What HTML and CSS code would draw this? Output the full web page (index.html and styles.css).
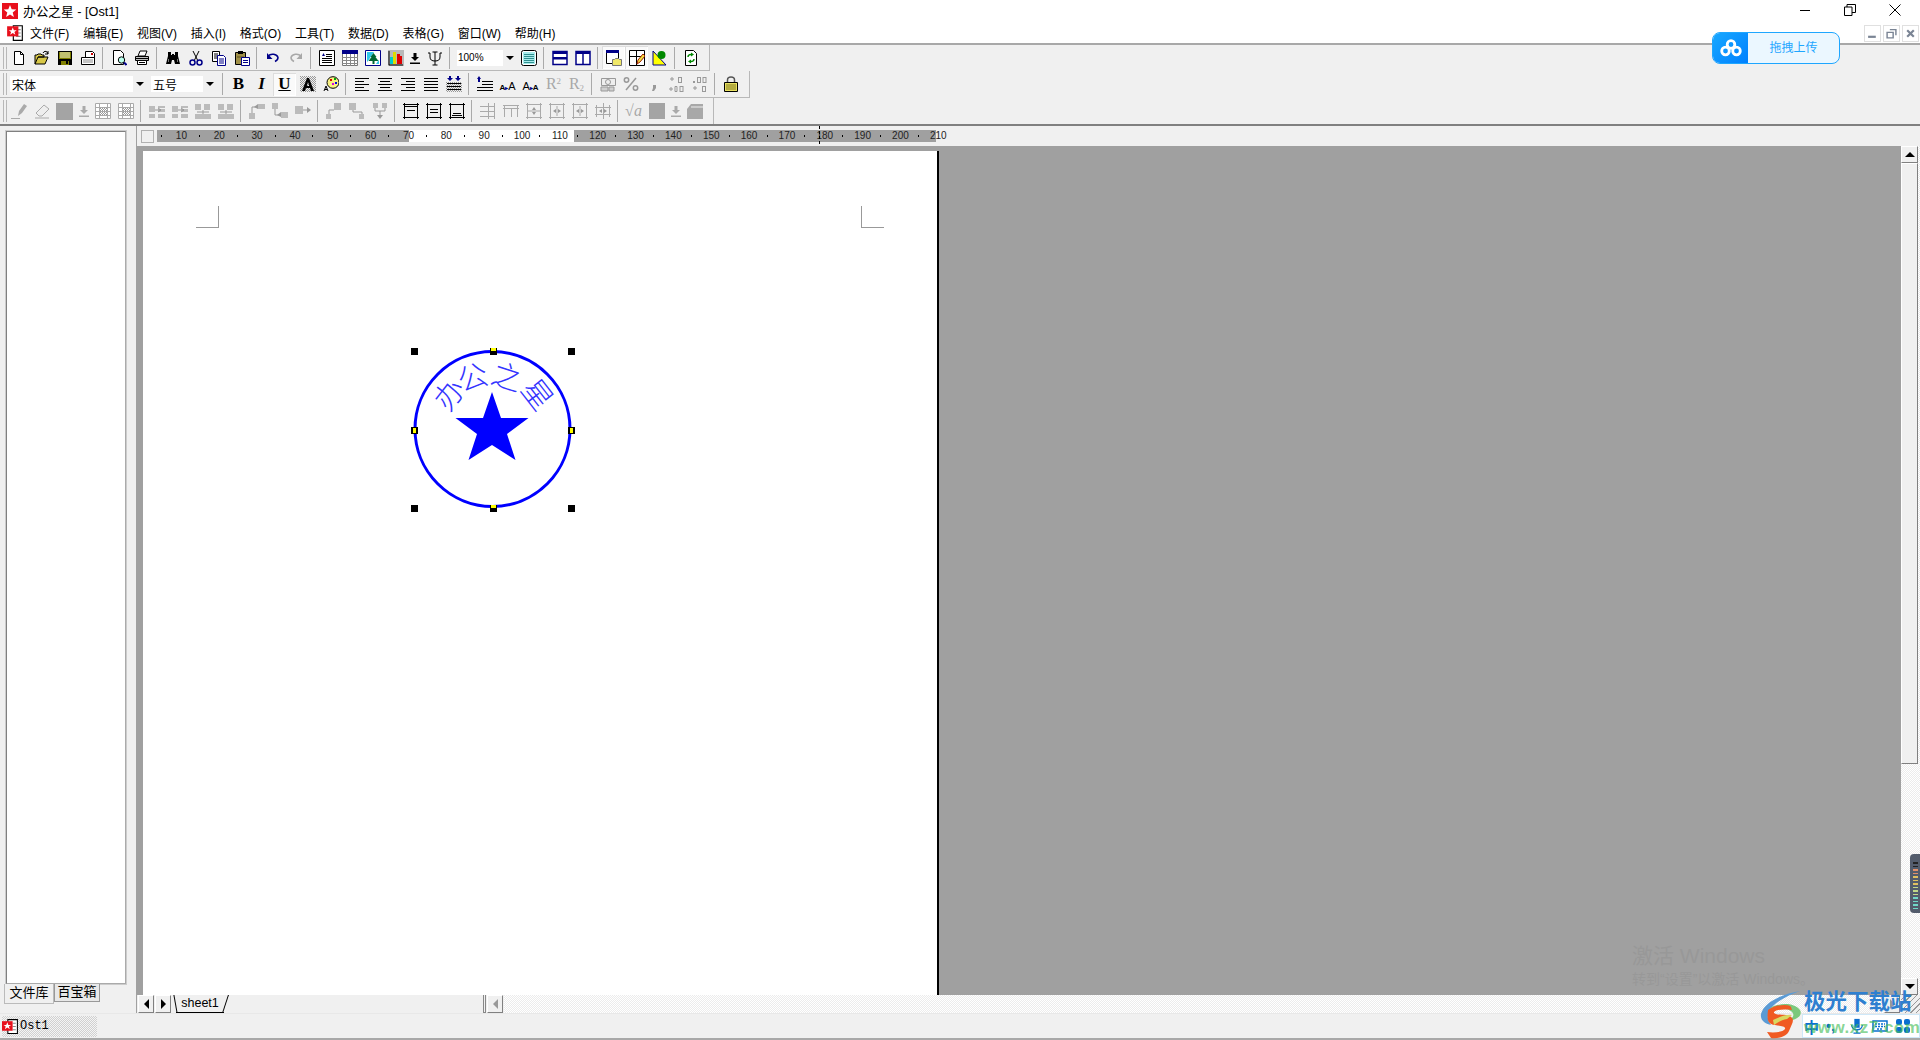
FILE: index.html
```html
<!DOCTYPE html>
<html lang="zh-CN">
<head>
<meta charset="utf-8">
<title>办公之星 - [Ost1]</title>
<link rel="stylesheet" href="styles.css">
</head>
<body>
<svg class="defs" width="0" height="0">
  <pattern id="hatch" width="2" height="2" patternUnits="userSpaceOnUse"><path d="M0 0h1v1H0zM1 1h1v1H1z" fill="#999"/></pattern>
  <symbol id="new" viewBox="0 0 16 16"><path d="M3.500 1.500h6l3 3v10h-9z" fill="#fff" stroke="#000"/><path d="M9.500 1.500v3h3" fill="none" stroke="#000"/></symbol>
  <symbol id="open" viewBox="0 0 16 16"><path d="M1 14V5h2l1-1h3l1 1h2v2H4l-3 7h10l3-7H4" fill="#d8c848" stroke="#000"/><path d="M9 3c1-2 3-2 4-1l1 2M14 1v3h-3" fill="none" stroke="#000"/></symbol>
  <symbol id="save" viewBox="0 0 16 16"><path d="M1 1h14v14H1z" fill="#000"/><path d="M2 2h12v7H2zM4 11h8v4H4z" fill="#808000"/><path d="M3 2h10v6H3z" fill="#c0c070"/><path d="M9 11h2v3H9z" fill="#000"/></symbol>
  <symbol id="form" viewBox="0 0 16 16"><path d="M5.500 1.500h7l2 2v5h-9z" fill="#fff" stroke="#000"/><path d="M1.500 7.500h13v7h-13z" fill="#fff" stroke="#000"/><path d="M3 10h10M3 12h10" stroke="#888"/><path d="M11 3h2v2h-2z" fill="#c00"/></symbol>
  <symbol id="preview" viewBox="0 0 16 16"><path d="M2.500.500h7l3 3v11h-10z" fill="#fff" stroke="#000"/><circle cx="10.500" cy="10" r="3.200" fill="#bfe" stroke="#000"/><path d="M13 12.500l2.500 2.500" stroke="#008" stroke-width="2"/></symbol>
  <symbol id="printer" viewBox="0 0 16 16"><path d="M4 6l2-5h7l-2 5z" fill="#fff" stroke="#000"/><path d="M1.500 6.500h13v4h-13z" fill="#c0c0c0" stroke="#000"/><path d="M3.500 10.500h9v4h-9z" fill="#fff" stroke="#000"/><path d="M1 8.500h14M5 12.500h6" stroke="#000"/></symbol>
  <symbol id="binoc" viewBox="0 0 16 16"><path d="M3 2h3v3h1v-1h2v1h1V2h3v4l2 8H10l-1-4H7l-1 4H1l2-8z" fill="#000"/><path d="M3 9h1v3H3zM12 9h1v3h-1z" fill="#777"/></symbol>
  <symbol id="cut" viewBox="0 0 16 16"><path d="M5 1l4.500 9M11 1l-4.500 9" stroke="#000" fill="none"/><circle cx="4.500" cy="12.500" r="2.500" fill="none" stroke="#008" stroke-width="1.500"/><circle cx="11.500" cy="12.500" r="2.500" fill="none" stroke="#008" stroke-width="1.500"/></symbol>
  <symbol id="copy" viewBox="0 0 16 16"><path d="M1.500 1.500h7v10h-7z" fill="#fff" stroke="#000"/><path d="M3 4h4M3 6h4M3 8h4" stroke="#000"/><path d="M6.500 5.500h6l2 2v8h-8z" fill="#fff" stroke="#008"/><path d="M8 9h5M8 11h5M8 13h5" stroke="#008"/></symbol>
  <symbol id="paste" viewBox="0 0 16 16"><path d="M1.500 2.500h10v12h-10z" fill="#a09048" stroke="#000"/><path d="M4 1h5v3H4z" fill="#000"/><path d="M3 7h7" stroke="#5c5020"/><path d="M7.500 7.500h8v8h-8z" fill="#fff" stroke="#008"/><path d="M9 10.500h5M9 12.500h5" stroke="#008"/></symbol>
  <symbol id="undo" viewBox="0 0 16 16"><path d="M3 6c3-3 9-2 10 1.500 0 2-1 3-3 4" fill="none" stroke="#008" stroke-width="1.500"/><path d="M2 3v6h5.500z" fill="#008"/></symbol>
  <symbol id="redo" viewBox="0 0 16 16"><path d="M13 6C10 3 4 4 3 7.500c0 2 1 3 3 4" fill="none" stroke="#a8a8a8" stroke-width="1.500"/><path d="M14 3v6H8.500z" fill="#a8a8a8"/></symbol>
  <symbol id="textdoc" viewBox="0 0 16 16"><path d="M.500.500h15v15H.500z" fill="#fff" stroke="#000"/><path d="M7 4.500h6M7 6.500h6M3 8.500h10M3 10.500h10M3 12.500h10" stroke="#000"/><path d="M3 6l1.500-3L6 6z" fill="#008"/></symbol>
  <symbol id="table" viewBox="0 0 16 16"><path d="M.500.500h15v15H.500z" fill="#fff" stroke="#777"/><path d="M0 0h16v4H0z" fill="#008"/><path d="M0 7.500h16M0 10.500h16M0 13.500h16M4.500 4v12M8.500 4v12M12.500 4v12" stroke="#888"/></symbol>
  <symbol id="image" viewBox="0 0 16 16"><path d="M.500.500h15v15H.500z" fill="#fff" stroke="#008"/><path d="M2 2h12v12H2z" fill="#fff"/><path d="M2 2h7L3 11l-1 1zM13 11l1-1v4h-3z" fill="#30c8e8"/><path d="M8.500 3l3 4h-1l3 4h-4v3h-2v-3h-4l3-4h-1z" fill="#063"/></symbol>
  <symbol id="chart" viewBox="0 0 16 16"><path d="M0 0h16v16H0z" fill="#b8b8b8"/><path d="M2 7h3v7H2z" fill="#0cc"/><path d="M5 2h3v12H5z" fill="#dd0"/><path d="M9 4h3v10H9z" fill="#d00"/><path d="M12 6h2v8h-2z" fill="#d00"/><path d="M1 1v14h14" fill="none" stroke="#000"/></symbol>
  <symbol id="down" viewBox="0 0 16 16"><path d="M6.500 3h3v4H12l-4 4-4-4h2.500zM3 12.500h10V14H3z" fill="#000"/></symbol>
  <symbol id="psi" viewBox="0 0 16 16"><path d="M8 2v13M5.500 15h5M5.500 2h5M1 3h2v4c0 3 2 4 5 4s5-1 5-4V3h2" fill="none" stroke="#000"/></symbol>
  <symbol id="preview2" viewBox="0 0 16 16"><rect x=".5" y=".5" width="15" height="15" rx="2" fill="#fff" stroke="#000"/><path d="M2 2h12v12H2z" fill="#a8ecec"/><path d="M3 4.500h10M3 6.500h10M3 8.500h10M3 10.500h10M3 12.500h10" stroke="#309090"/></symbol>
  <symbol id="hsplit" viewBox="0 0 16 16"><path d="M1 1.500h14v13H1z" fill="#fff" stroke="#008" stroke-width="1.500"/><path d="M1 1h14v3H1zM1 7h14v2.500H1z" fill="#008"/></symbol>
  <symbol id="vsplit" viewBox="0 0 16 16"><path d="M1 1.500h14v13H1z" fill="#fff" stroke="#008" stroke-width="1.500"/><path d="M1 1h14v3H1z" fill="#008"/><path d="M8 1v14" stroke="#008" stroke-width="1.500"/></symbol>
  <symbol id="winfolder" viewBox="0 0 16 16"><path d="M.500.500h12v13H.500z" fill="#fff" stroke="#000"/><path d="M0 0h13v3H0z" fill="#008"/><path d="M6.500 9.500h2l1-1h3l1 1h2v6h-9z" fill="#f0e868" stroke="#777"/></symbol>
  <symbol id="gridpen" viewBox="0 0 16 16"><path d="M.500.500h15v15H.500zM.500 6.500h15M7.500.500v15" fill="#fff" stroke="#000"/><path d="M8 14l1-4 5-6 2 2-5 6z" fill="#f0e040" stroke="#a02000"/></symbol>
  <symbol id="shapes" viewBox="0 0 16 16"><path d="M1 1v14h13z" fill="#ff0" stroke="#008"/><circle cx="9.500" cy="5" r="4" fill="#080"/></symbol>
  <symbol id="refresh" viewBox="0 0 16 16"><path d="M2.500.500h8l3 3v12h-11z" fill="#fff" stroke="#000"/><path d="M5 7c0-2 2-3 4-2M11 9c0 2-2 3-4 2" fill="none" stroke="#080" stroke-width="1.500"/><path d="M8 2.500l3 2-3 2zM8 9.500l-3 2 3 2z" fill="#080"/></symbol>
  <symbol id="acolor" viewBox="0 0 16 16"><path d="M0 0h16v16H0z" fill="url(#hatch)"/><path d="M2 15L7 2h2l5 13h-3l-1-3H6l-1 3zM6.800 10h2.400L8 6z" fill="#000"/></symbol>
  <symbol id="palette" viewBox="0 0 16 16"><ellipse cx="10" cy="6.500" rx="6" ry="5.800" fill="#f8f080" stroke="#000"/><path d="M7 3h2v2H7z" fill="#d00"/><path d="M11 2h2v2h-2z" fill="#0a0"/><path d="M12 6h2v2h-2z" fill="#00d"/><path d="M9 7h2v2H9z" fill="#d0d"/><path d="M1 15l2-5 2 5M2 13.500h2" fill="none" stroke="#000"/></symbol>
  <symbol id="left" viewBox="0 0 16 16"><path d="M1 2.500h14M1 5.500h9M1 8.500h14M1 11.500h9M1 14.500h14" stroke="#000"/></symbol>
  <symbol id="center" viewBox="0 0 16 16"><path d="M1 2.500h14M3 5.500h10M1 8.500h14M3 11.500h10M1 14.500h14" stroke="#000"/></symbol>
  <symbol id="right" viewBox="0 0 16 16"><path d="M1 2.500h14M6 5.500h9M1 8.500h14M6 11.500h9M1 14.500h14" stroke="#000"/></symbol>
  <symbol id="justify" viewBox="0 0 16 16"><path d="M1 2.500h14M1 5.500h14M1 8.500h14M1 11.500h14M1 14.500h14" stroke="#000"/></symbol>
  <symbol id="distribute" viewBox="0 0 16 16"><path d="M0 6h16v10H0z" fill="url(#hatch)"/><path d="M1 7.500h14M1 10.500h14M1 13.500h14" stroke="#000"/><path d="M3 0h2v2h2L4 5 1 2h2zM11 0h2v2h2l-3 3-3-3h2z" fill="#008"/></symbol>
  <symbol id="spacing" viewBox="0 0 16 16"><path d="M5 5.500h11M5 8.500h11M0 11.500h16M0 14.500h16" stroke="#000"/><path d="M2 0l2 3H0zM1 3h2v3H1z" fill="#008"/></symbol>
  <symbol id="money" viewBox="0 0 16 16"><path d="M1.500 2.500h14v7h-14z" fill="#eee" stroke="#999"/><circle cx="8" cy="6" r="2.500" fill="none" stroke="#999"/><path d="M1 11h7v4H1zM9 11h5v4H9z" fill="#d0d0d0" stroke="#999"/></symbol>
  <symbol id="percent" viewBox="0 0 16 16"><circle cx="3.500" cy="4" r="2.200" fill="none" stroke="#999" stroke-width="1.500"/><circle cx="12.500" cy="12" r="2.200" fill="none" stroke="#999" stroke-width="1.500"/><path d="M13 2L3 14" stroke="#999" stroke-width="1.500"/></symbol>
  <symbol id="comma" viewBox="0 0 16 16"><path d="M7 9h3v3l-2 3H6l1-3z" fill="#999"/></symbol>
  <symbol id="incdec" viewBox="0 0 16 16"><path d="M3 1v4M1 3h4" stroke="#999"/><rect x="9.500" y="1.500" width="3" height="5" fill="none" stroke="#999"/><path d="M1 12h2v2H1zM6 10.500h2v5H6z" fill="none" stroke="#999"/><rect x="11" y="10.500" width="3" height="5" fill="none" stroke="#999"/></symbol>
  <symbol id="decdec" viewBox="0 0 16 16"><path d="M1 5h2v2H1z" fill="#999"/><rect x="5.500" y="1.500" width="3" height="5" fill="none" stroke="#999"/><rect x="11" y="1.500" width="3" height="5" fill="none" stroke="#999"/><path d="M1 12h4M3 10v4" stroke="#999"/><rect x="10.500" y="10.500" width="3" height="5" fill="none" stroke="#999"/></symbol>
  <symbol id="lock" viewBox="0 0 16 16"><path d="M4.500 7V4c0-4 7-4 7 0v3" fill="none" stroke="#555" stroke-width="1.500"/><path d="M1.500 6.500h13v9h-13z" fill="#e8e060" stroke="#000"/><path d="M3 9h10M3 11h10M3 13h10" stroke="#807820"/></symbol>
  <symbol id="pen" viewBox="0 0 16 16"><path d="M0 15.500h9" stroke="#aaa"/><path d="M7 13l1-5 5-7 3 2-5 7z" fill="#aaa"/></symbol>
  <symbol id="eraser" viewBox="0 0 16 16"><path d="M2 10l8-8 5 4-7 7H5z" fill="#eee" stroke="#aaa"/><path d="M1 15h14" stroke="#aaa"/></symbol>
  <symbol id="gdown" viewBox="0 0 16 16"><path d="M6.500 3h3v4H12l-4 4-4-4h2.500zM3 12.500h10V14H3z" fill="#aaa"/></symbol>
  <symbol id="gtable" viewBox="0 0 16 16"><path d="M.500.500h15v15H.500z" fill="#fff" stroke="#aaa"/><path d="M4 4h8v8H4z" fill="url(#hatch)"/><path d="M0 4.500h16M0 8.500h16M0 12.500h16M4.500 0v16M12.500 0v16" stroke="#aaa"/></symbol>
  <symbol id="gbox1" viewBox="0 0 16 16"><path d="M0 3h6v6H0zM9 3h7v2H9zM9 6h7v3H9zM0 11h6v4H0zM9 11h7v4H9z" fill="#bbb"/><path d="M6 7h6M9 5l3 2-3 2" stroke="#999" fill="none"/></symbol>
  <symbol id="gbox2" viewBox="0 0 16 16"><path d="M0 1h6v6H0zM9 1h6v6H9zM0 11h6v5H0zM5 11h6v5H5zM11 11h5v5h-5z" fill="#bbb"/><path d="M8 7v4M2 9h12" stroke="#999"/></symbol>
  <symbol id="gflow1" viewBox="0 0 16 16"><path d="M0 10h6v6H0zM9 1h7v5H9z" fill="#bbb"/><path d="M3 10V4h6" fill="none" stroke="#999"/><path d="M9 1L5 4l4 2z" fill="#999"/></symbol>
  <symbol id="gflow2" viewBox="0 0 16 16"><path d="M0 0h6v6H0zM9 9h7v6H9z" fill="#bbb"/><path d="M3 6v6h6" fill="none" stroke="#999"/><path d="M9 9l-4 3 4 2z" fill="#999"/></symbol>
  <symbol id="gflow3" viewBox="0 0 16 16"><path d="M0 3h8v8H0z" fill="#bbb"/><path d="M8 7h6" stroke="#999"/><path d="M12 4l4 3-4 3z" fill="#999"/></symbol>
  <symbol id="gup1" viewBox="0 0 16 16"><path d="M0 11h5v5H0zM8 0h7v7H8z" fill="#bbb"/><path d="M3 11V7h5" fill="none" stroke="#999"/></symbol>
  <symbol id="gup2" viewBox="0 0 16 16"><path d="M0 0h7v7H0zM10 11h5v5h-5z" fill="#bbb"/><path d="M4 7v2h9v2" fill="none" stroke="#999"/></symbol>
  <symbol id="gup3" viewBox="0 0 16 16"><path d="M1 0h5v5H1zM10 0h5v5h-5z" fill="#bbb"/><path d="M3 5v3h10V5M8 8v5" fill="none" stroke="#999"/><path d="M5 12h6l-3 4z" fill="#999"/></symbol>
  <symbol id="frame1" viewBox="0 0 16 16"><path d="M0 1.500h16M0 14.500h16M1.500 0v16M14.500 0v16" stroke="#000"/><path d="M2 3.500h12M4 7.500h8" stroke="#000" fill="none"/></symbol>
  <symbol id="frame2" viewBox="0 0 16 16"><path d="M0 1.500h16M0 14.500h16M1.500 0v16M14.500 0v16" stroke="#000"/><path d="M4 6.500h8M4 9.500h8" stroke="#000"/></symbol>
  <symbol id="frame3" viewBox="0 0 16 16"><path d="M0 1.500h16M0 14.500h16M1.500 0v16M14.500 0v16" stroke="#000"/><path d="M3 12.500h10M4 10.500h8" stroke="#000"/></symbol>
  <symbol id="g1" viewBox="0 0 16 16"><path d="M8.500 0v16M14.500 0v16M0 3.500h15M0 8.500h15M0 13.500h15" stroke="#aaa"/></symbol>
  <symbol id="g2" viewBox="0 0 16 16"><path d="M0 2.500h16M0 5.500h16M1.500 2v12M8.500 5v9M14.500 2v12" stroke="#aaa"/></symbol>
  <symbol id="g3" viewBox="0 0 16 16"><path d="M1.500 0v16M14.500 0v16M0 1.500h16M0 14.500h16M1 8h14" stroke="#aaa"/><path d="M8 4l2 3H6zM8 12l2-3H6z" fill="#999"/></symbol>
  <symbol id="g4" viewBox="0 0 16 16"><path d="M0 1.500h16M0 14.500h16M1.500 0v16M14.500 0v16M8 3v10" stroke="#aaa"/><path d="M4 8l3-2v4zM12 8L9 6v4z" fill="#999"/></symbol>
  <symbol id="g5" viewBox="0 0 16 16"><path d="M8.500 0v16M0 4.500h16M0 11.500h16M1.500 2v12M14.500 2v12" stroke="#aaa"/><path d="M4 8l3-2v4zM12 8L9 6v4z" fill="#999"/></symbol>
  <symbol id="folderg" viewBox="0 0 16 16"><path d="M0 6l4-5h12v15H0z" fill="#a8a8a8"/><path d="M4 4h12" stroke="#eee"/></symbol>
</svg>

<div class="app">
  <header class="title-bar">
    <svg class="app-icon" viewBox="0 0 16 16"><rect width="16" height="16" fill="#e8101c"/><path d="M8 2l1.700 4.300 4.600.300-3.600 2.900 1.200 4.500L8 11.500l-3.900 2.500 1.200-4.500-3.600-2.900 4.600-.300z" fill="#fff"/></svg>
    <span class="title-text">办公之星 - [Ost1]</span>
    <div class="win-controls">
      <svg class="win-btn" viewBox="0 0 12 12"><path d="M1 6.500h10" stroke="#000"/></svg>
      <svg class="win-btn" viewBox="0 0 12 12"><path d="M.500 3h7.500v8.500H.500z" fill="none" stroke="#000"/><path d="M3 3V.500h8.500v8H8" fill="none" stroke="#000"/></svg>
      <svg class="win-btn" viewBox="0 0 12 12"><path d="M.500.500l11 11M11.500.500l-11 11" stroke="#000"/></svg>
    </div>
  </header>

  <nav class="menu-bar">
    <svg class="doc-icon" viewBox="0 0 16 16"><path d="M6.500 1.500h8v13h-8z" fill="#fff" stroke="#000"/><path d="M9 5h4M9 8h4M9 11h4" stroke="#888"/><rect x="1" y="2" width="10" height="9" fill="#e8101c"/><path d="M6 3l1 2.500h2.500L7.500 7l.8 2.500L6 8 3.700 9.500 4.500 7 2.500 5.500H5z" fill="#fff"/></svg>
    <span class="menu-item">文件(F)</span>
    <span class="menu-item">编辑(E)</span>
    <span class="menu-item">视图(V)</span>
    <span class="menu-item">插入(I)</span>
    <span class="menu-item">格式(O)</span>
    <span class="menu-item">工具(T)</span>
    <span class="menu-item">数据(D)</span>
    <span class="menu-item">表格(G)</span>
    <span class="menu-item">窗口(W)</span>
    <span class="menu-item">帮助(H)</span>
    <div class="mdi-controls">
      <span class="mdi-btn"><svg viewBox="0 0 10 10"><path d="M1 7h7v2H1z" fill="#7a8494"/></svg></span>
      <span class="mdi-btn"><svg viewBox="0 0 10 10"><path d="M1 4h5.500v5H1zM3.500 1.500H9v5" fill="none" stroke="#7a8494" stroke-width="1.300"/></svg></span>
      <span class="mdi-btn"><svg viewBox="0 0 10 10"><path d="M2 2l6 6M8 2L2 8" stroke="#7a8494" stroke-width="2"/></svg></span>
    </div>
  </nav>

  <div class="toolbars">
    <div class="tb">
      <i class="grip"></i>
      <span class="b"><svg><use href="#new"/></svg></span>
      <span class="b"><svg><use href="#open"/></svg></span>
      <span class="b"><svg><use href="#save"/></svg></span>
      <span class="b"><svg><use href="#form"/></svg></span>
      <i class="sep"></i>
      <span class="b"><svg><use href="#preview"/></svg></span>
      <span class="b"><svg><use href="#printer"/></svg></span>
      <i class="sep"></i>
      <span class="b"><svg><use href="#binoc"/></svg></span>
      <span class="b"><svg><use href="#cut"/></svg></span>
      <span class="b"><svg><use href="#copy"/></svg></span>
      <span class="b"><svg><use href="#paste"/></svg></span>
      <i class="sep"></i>
      <span class="b"><svg><use href="#undo"/></svg></span>
      <span class="b"><svg><use href="#redo"/></svg></span>
      <i class="sep"></i>
      <span class="b"><svg><use href="#textdoc"/></svg></span>
      <span class="b"><svg><use href="#table"/></svg></span>
      <span class="b"><svg><use href="#image"/></svg></span>
      <span class="b"><svg><use href="#chart"/></svg></span>
      <span class="b narrow"><svg><use href="#down"/></svg></span>
      <span class="b"><svg><use href="#psi"/></svg></span>
      <i class="sep"></i>
      <span class="combo zoom-combo"><span class="combo-text">100%</span><span class="combo-arrow"></span></span>
      <span class="b"><svg><use href="#preview2"/></svg></span>
      <i class="sep"></i>
      <span class="b"><svg><use href="#hsplit"/></svg></span>
      <span class="b"><svg><use href="#vsplit"/></svg></span>
      <i class="sep"></i>
      <span class="b pressed"><svg><use href="#winfolder"/></svg></span>
      <span class="b pressed"><svg><use href="#gridpen"/></svg></span>
      <span class="b"><svg><use href="#shapes"/></svg></span>
      <i class="sep"></i>
      <span class="b"><svg><use href="#refresh"/></svg></span>
      <i class="end"></i>
    </div>
    <div class="tb">
      <i class="grip"></i>
      <span class="combo font-combo"><span class="combo-text">宋体</span><span class="combo-arrow"></span></span>
      <span class="combo size-combo"><span class="combo-text">五号</span><span class="combo-arrow"></span></span>
      <i class="sep"></i>
      <span class="b letter bold">B</span>
      <span class="b letter italic">I</span>
      <span class="b letter under pressed">U</span>
      <span class="b"><svg><use href="#acolor"/></svg></span>
      <span class="b"><svg><use href="#palette"/></svg></span>
      <i class="sep"></i>
      <span class="b"><svg><use href="#left"/></svg></span>
      <span class="b"><svg><use href="#center"/></svg></span>
      <span class="b"><svg><use href="#right"/></svg></span>
      <span class="b"><svg><use href="#justify"/></svg></span>
      <span class="b"><svg><use href="#distribute"/></svg></span>
      <i class="sep"></i>
      <span class="b"><svg><use href="#spacing"/></svg></span>
      <span class="b aa"><span class="aa-s">A</span><span class="aa-arrow">▸</span><span class="aa-l">A</span></span>
      <span class="b aa"><span class="aa-l">A</span><span class="aa-arrow">▸</span><span class="aa-s">A</span></span>
      <span class="b script"><span class="r">R</span><span class="r-up">2</span></span>
      <span class="b script"><span class="r">R</span><span class="r-down">2</span></span>
      <i class="sep"></i>
      <span class="b"><svg><use href="#money"/></svg></span>
      <span class="b"><svg><use href="#percent"/></svg></span>
      <span class="b"><svg><use href="#comma"/></svg></span>
      <span class="b"><svg><use href="#incdec"/></svg></span>
      <span class="b"><svg><use href="#decdec"/></svg></span>
      <i class="sep"></i>
      <span class="b"><svg><use href="#lock"/></svg></span>
      <i class="end"></i>
    </div>
    <div class="tb">
      <i class="grip"></i>
      <span class="b"><svg><use href="#pen"/></svg></span>
      <span class="b"><svg><use href="#eraser"/></svg></span>
      <span class="b"><i class="gray-square"></i></span>
      <span class="b narrow"><svg><use href="#gdown"/></svg></span>
      <span class="b"><svg><use href="#gtable"/></svg></span>
      <span class="b"><svg><use href="#gtable"/></svg></span>
      <i class="sep"></i>
      <span class="b"><svg><use href="#gbox1"/></svg></span>
      <span class="b"><svg><use href="#gbox1"/></svg></span>
      <span class="b"><svg><use href="#gbox2"/></svg></span>
      <span class="b"><svg><use href="#gbox2"/></svg></span>
      <i class="sep"></i>
      <span class="b"><svg><use href="#gflow1"/></svg></span>
      <span class="b"><svg><use href="#gflow2"/></svg></span>
      <span class="b"><svg><use href="#gflow3"/></svg></span>
      <i class="sep"></i>
      <span class="b"><svg><use href="#gup1"/></svg></span>
      <span class="b"><svg><use href="#gup2"/></svg></span>
      <span class="b"><svg><use href="#gup3"/></svg></span>
      <i class="sep"></i>
      <span class="b"><svg><use href="#frame1"/></svg></span>
      <span class="b"><svg><use href="#frame2"/></svg></span>
      <span class="b"><svg><use href="#frame3"/></svg></span>
      <i class="sep"></i>
      <span class="b"><svg><use href="#g1"/></svg></span>
      <span class="b"><svg><use href="#g2"/></svg></span>
      <span class="b"><svg><use href="#g3"/></svg></span>
      <span class="b"><svg><use href="#g4"/></svg></span>
      <span class="b"><svg><use href="#g4"/></svg></span>
      <span class="b"><svg><use href="#g5"/></svg></span>
      <i class="sep"></i>
      <span class="b script"><span class="r sqrt">√a</span></span>
      <span class="b"><i class="gray-square small"></i></span>
      <span class="b narrow"><svg><use href="#gdown"/></svg></span>
      <span class="b"><svg><use href="#folderg"/></svg></span>
      <i class="end"></i>
    </div>
  </div>

  <div class="workspace">
    <aside class="side">
      <div class="side-frame"></div>
      <div class="side-tabs"><span class="side-tab active">文件库</span><span class="side-tab">百宝箱</span></div>
    </aside>
    <main class="main">
      <div class="ruler-row">
        <span class="ruler-corner"></span>
        <div class="ruler">
          <span class="tick">10</span><span class="tick">20</span><span class="tick">30</span><span class="tick">40</span><span class="tick">50</span><span class="tick">60</span><span class="tick">70</span><span class="tick">80</span><span class="tick">90</span><span class="tick">100</span><span class="tick">110</span><span class="tick">120</span><span class="tick">130</span><span class="tick">140</span><span class="tick">150</span><span class="tick">160</span><span class="tick">170</span><span class="tick">180</span><span class="tick">190</span><span class="tick">200</span><span class="tick">210</span>
          <i class="ruler-marker"></i>
        </div>
      </div>
      <div class="canvas-row">
        <div class="canvas">
          <div class="page">
            <i class="crop crop-l"></i>
            <i class="crop crop-r"></i>
            <svg class="stamp" viewBox="0 0 172 172" width="172" height="172">
              <circle cx="86.500" cy="86" r="77.500" fill="none" stroke="#0000ff" stroke-width="3"/>
              <path d="M86 49l9 26h27.500L101 91l8.500 26L86 102l-23.500 15L71 91 49.500 75H77z" fill="#0000ff"/>
              <g class="stamp-text">
                <text transform="translate(52 58) rotate(-52)">办</text>
                <text transform="translate(70 44.500) rotate(-18)">公</text>
                <text transform="translate(97.500 44.500) rotate(18)">之</text>
                <text transform="translate(123 58) rotate(52)">星</text>
              </g>
              <g fill="#000">
                <rect x="5" y="5" width="7" height="7"/><rect x="162" y="5" width="7" height="7"/><rect x="5" y="162" width="7" height="7"/><rect x="162" y="162" width="7" height="7"/>
                <rect x="84" y="5" width="7" height="7"/><rect x="84" y="162" width="7" height="7"/><rect x="5" y="84" width="7" height="7"/><rect x="162" y="84" width="7" height="7"/>
              </g>
              <g fill="#ff0">
                <rect x="85" y="5" width="5" height="3"/><rect x="85" y="162" width="5" height="3"/><rect x="7" y="85" width="3" height="5"/><rect x="164" y="85" width="3" height="5"/>
              </g>
            </svg>
          </div>
        </div>
        <div class="vscroll">
          <span class="sb-btn"><i class="arrow up"></i></span>
          <span class="sb-thumb"></span>
          <span class="sb-track"></span>
          <span class="sb-btn"><i class="arrow dn"></i></span>
        </div>
      </div>
      <div class="sheet-bar">
        <span class="sb-btn nav"><i class="arrow lf"></i></span>
        <span class="sb-btn nav"><i class="arrow rt"></i></span>
        <span class="sheet-tab">sheet1</span>
        <span class="sheet-fill"></span>
        <span class="h-split"></span>
        <span class="sb-btn nav"><i class="arrow lf dim"></i></span>
        <span class="h-track"></span>
        <span class="sb-btn nav"><i class="arrow rt dim"></i></span>
        <span class="grip-corner"></span>
      </div>
    </main>
  </div>

  <footer class="status-bar">
    <span class="doc-tab">
      <svg class="doc-icon small" viewBox="0 0 16 16"><path d="M5.500 1.500h9v13h-9z" fill="#fff" stroke="#000"/><path d="M10 5h3M10 8h3M10 11h3" stroke="#888"/><rect x="0" y="3" width="10" height="9" fill="#e8101c"/><path d="M5 4l1 2.500h2.500L6.500 8l.8 2.500L5 9l-2.300 1.500.8-2.500-2-1.500H4z" fill="#fff"/></svg>
      <span class="doc-name">Ost1</span>
    </span>
  </footer>

  <div class="upload">
    <span class="upload-icon"><svg viewBox="0 0 22 18" width="22" height="18"><g fill="none" stroke="#fff" stroke-width="2.800"><circle cx="11" cy="5.500" r="3.800"/><circle cx="5.500" cy="12" r="3.800"/><circle cx="16.500" cy="12" r="3.800"/></g></svg></span>
    <span class="upload-text">拖拽上传</span>
  </div>

  <div class="activate"><div class="act-1">激活 Windows</div><div class="act-2">转到“设置”以激活 Windows。</div></div>

  <div class="meter"><i class="m1"></i><i class="m1"></i><i class="m2"></i><i class="m2"></i><i class="m3"></i><i class="m3"></i><i class="m3"></i><i class="m4"></i><i class="m4"></i><i class="m4"></i><i class="m5"></i><i class="m5"></i><i class="m5"></i><i class="m5"></i></div>

  <div class="ime">
    <span class="ime-zh">中</span>
    <span class="ime-dots">•,</span>
    <svg class="ime-ic" viewBox="0 0 16 18"><path d="M5 1h6v10H5z" fill="#0a6fd0"/><path d="M2 8c0 7 12 7 12 0M8 13v4M4 17h8" fill="none" stroke="#0a6fd0" stroke-width="1.500"/></svg>
    <svg class="ime-ic" viewBox="0 0 16 16"><path d="M1 3h14v10H1z" fill="none" stroke="#0a6fd0" stroke-width="1.500"/><path d="M3 6h10M3 8.500h10M5 11h6" stroke="#0a6fd0" stroke-width="1.300" stroke-dasharray="2 1"/></svg>
    <svg class="ime-ic" viewBox="0 0 16 16"><rect x="1" y="1" width="6" height="6" rx="2" fill="#0a6fd0"/><rect x="9" y="1" width="6" height="6" rx="2" fill="#0a6fd0"/><rect x="1" y="9" width="6" height="6" rx="2" fill="#0a6fd0"/><rect x="9" y="9" width="6" height="6" rx="2" fill="#0a6fd0"/></svg>
  </div>

  <div class="site-mark">
    <svg class="site-logo" viewBox="0 0 44 50" width="44" height="50">
      <path d="M40 1C22 4 4 12 1 24c-1 7 5 10 10 11C7 30 6 24 13 16 20 9 30 5 40 1z" fill="#5b9bd5"/>
      <path d="M10 18c8-5 24-6 30 2 3 5-3 10-12 11 5-3 7-6 4-9-4-4-14-5-22-4z" fill="#7cc87c"/>
      <path d="M8 20c8-6 22-6 23-3l1 3c-6-1-16-1-18 2-1 2 6 3 12 3 7 1 8 5 6 9l-3 7c-2 5-10 8-18 7l-4-6c8 1 16 0 18-3 1-3-5-3-10-4-8-1-8-6-7-15z" fill="#f05a22"/>
      <path d="M13 30c6-3 14-6 19-5l-5 4c-5 1-9 3-13 6z" fill="#d8d860"/>
    </svg>
    <div class="site-text">
      <div class="site-name">极光下载站</div>
      <div class="site-url">www.xz7.com</div>
    </div>
  </div>
</div>
</body>
</html>
```
FILE: styles.css
```css
* { box-sizing: border-box; }
html, body { margin: 0; padding: 0; }
body {
  width: 1920px;
  height: 1040px;
  overflow: hidden;
  background: #f0f0f0;
  font: 12px "Liberation Sans", "Noto Sans CJK SC", sans-serif;
  color: #000;
}
.defs { position: absolute; }
.app { position: relative; display: flex; flex-direction: column; height: 1040px; }

.title-bar { display: flex; align-items: center; height: 22px; background: #fff; flex: none; padding-left: 2px; }
.app-icon { width: 16px; height: 16px; }
.title-text { margin-left: 5px; font-size: 12.700px; margin-top: -1px; }
.win-controls { margin-left: auto; display: flex; gap: 33px; padding-right: 19px; align-items: center; margin-top: -2px; }
.win-btn { width: 12px; height: 12px; }

.menu-bar { display: flex; align-items: center; height: 23px; background: #fff; border-bottom: 2px solid #a8a8a8; flex: none; padding-left: 6px; position: relative; }
.doc-icon { width: 18px; height: 18px; margin-right: 6px; }
.doc-icon.small { margin: 0 2px 0 0; width: 17px; height: 17px; }
.menu-item { margin-right: 13.800px; white-space: nowrap; }
.mdi-controls { margin-left: auto; display: flex; gap: 2px; padding-right: 1px; margin-top: 2px; }
.mdi-btn { width: 17px; height: 17px; border: 1px solid #e0e0e0; display: flex; align-items: center; justify-content: center; background: #fff; }
.mdi-btn svg { width: 11px; height: 11px; }

.toolbars { flex: none; border-bottom: 2px solid #808080; }
.tb { display: flex; align-items: center; height: 26px; width: fit-content; border-bottom: 1px solid #b8b8b8; }
.tb:nth-child(2) { height: 27px; }
.tb:last-child { border-bottom: 0; height: 26px; }
.grip { width: 8px; height: 22px; flex: none; margin-left: 3px; margin-right: -4px; border-left: 1px solid #b8b8b8; position: relative; }
.grip::after { content: ""; position: absolute; left: 2px; top: 0; bottom: 0; width: 1px; background: #b8b8b8; }
.b { width: 23px; height: 23px; display: flex; flex: none; align-items: center; justify-content: center; }
.b.narrow { width: 15px; }
.tb:first-child .b.narrow { width: 16px; }
.b svg { width: 16px; height: 16px; display: block; flex: none; }
.b.pressed { background: #fafafa; box-shadow: inset 1px 1px 0 #ddd, inset -1px -1px 0 #fff; }
.sep { width: 8px; height: 22px; flex: none; margin: 0; position: relative; }
.sep::before { content: ""; position: absolute; left: 3px; top: 0; bottom: 0; width: 1px; background: #aaa; }
.end { width: 8px; height: 100%; flex: none; border-right: 1px solid #b8b8b8; }
.letter { font: 700 17px "Liberation Serif", serif; }
.italic { font-style: italic; }
.under { text-decoration: underline; }
.gray-square { display: block; width: 17px; height: 17px; background: #a4a4a4; }
.gray-square.small { width: 16px; height: 16px; }
.aa { font: 700 8px "Liberation Sans", sans-serif; align-items: baseline; padding-top: 7px; }
.aa-l { font-size: 11px; font-weight: 400; }
.aa-s { font-size: 8px; }
.aa-arrow { font-size: 6px; color: #008; }
.script { font: 16px "Liberation Serif", serif; color: #a8a8a8; align-items: center; }
.r-up { font-size: 9px; align-self: flex-start; margin-top: 3px; }
.r-down { font-size: 9px; align-self: flex-end; margin-bottom: 3px; }
.sqrt { font-style: italic; }

.combo { display: flex; align-items: center; height: 16px; background: #fff; flex: none; justify-content: space-between; }
.combo-text { padding-left: 2px; font-size: 12px; }
.combo-arrow { width: 14px; height: 16px; background: #f0f0f0; position: relative; }
.combo-arrow::after { content: ""; position: absolute; left: 3px; top: 6px; border: 4px solid transparent; border-top: 4px solid #000; border-bottom: 0; }
.font-combo { width: 137px; margin-left: 3px; }
.size-combo { width: 66px; margin-left: 4px; margin-right: 2px; }
.zoom-combo { width: 60px; margin-left: 3px; }
.zoom-combo .combo-text { padding-left: 1px; font-size: 10px; }

.workspace { flex: 1; display: flex; min-height: 0; }
.side { width: 137px; flex: none; border-right: 1px solid #a0a0a0; display: flex; flex-direction: column; padding: 5px 10px 9px 6px; }
.side-frame { flex: 1; background: #fff; border: 1px solid #808080; border-right-color: #aaa; border-bottom-color: #aaa; box-shadow: 0 0 0 1px #ccc; }
.side-tabs { display: flex; height: 20px; align-items: flex-start; margin-left: -2px; }
.side-tab { border: 1px solid #999; border-top: 0; width: 46px; height: 18px; line-height: 16px; font-size: 13px; background: #e8e8e8; text-align: center; white-space: nowrap; }
.side-tab.active { width: 50px; height: 20px; background: #f0f0f0; border-color: #bbb; line-height: 18px; }

.main { flex: 1; min-width: 0; display: flex; flex-direction: column; }
.ruler-row { height: 20px; flex: none; display: flex; padding: 4px 0 0 4px; }
.ruler-corner { width: 13px; height: 13px; border: 1px solid #b0b0b0; margin-right: 3px; flex: none; }
.ruler { width: 779px; height: 12px; display: flex; position: relative; background: linear-gradient(90deg, #a0a0a0 0 252px, #fff 252px 417px, #a0a0a0 417px); }
.tick { width: 37.850px; flex: none; font-size: 10px; line-height: 12px; padding-left: 11px; white-space: nowrap; position: relative; color: #222; text-align: center; }
.tick::before { content: ""; position: absolute; left: 4px; top: 5px; width: 1px; height: 2px; background: #000; }
.ruler-marker { position: absolute; left: 662px; top: -4px; height: 18px; border-left: 1px dashed #000; }

.canvas-row { flex: 1; display: flex; min-height: 0; }
.canvas { flex: 1; min-width: 0; background: #a0a0a0; padding: 5px 0 0 6px; overflow: hidden; }
.page { position: relative; width: 796px; height: 100%; background: #fff; border-right: 2px solid #000; }
.crop { position: absolute; top: 55px; width: 23px; height: 22px; border-bottom: 1px solid #999; }
.crop-l { left: 53px; border-right: 1px solid #999; }
.crop-r { left: 718px; border-left: 1px solid #999; }
.stamp { position: absolute; left: 263px; top: 192px; }
.stamp-text text { font: 300 30px "Noto Sans CJK SC", sans-serif; fill: #3434ff; text-anchor: middle; }

.vscroll { width: 19px; flex: none; display: flex; flex-direction: column; background: repeating-conic-gradient(#fff 0 25%, #ececec 0 50%) 0 0 / 2px 2px; }
.sb-btn { width: 17px; height: 17px; background: #f0f0f0; border: 1px solid; border-color: #fff #808080 #808080 #fff; display: flex; align-items: center; justify-content: center; flex: none; }
.sb-thumb { height: 601px; flex: none; width: 17px; background: #f0f0f0; border: 1px solid; border-color: #fff #808080 #808080 #fff; }
.sb-track { flex: 1; }
.arrow { width: 0; height: 0; border: 5px solid transparent; }
.arrow.up { border-bottom-color: #000; border-top: 0; }
.arrow.dn { border-top-color: #000; border-bottom: 0; }
.arrow.lf { border-right-color: #000; border-left: 0; }
.arrow.rt { border-left-color: #000; border-right: 0; }
.arrow.dim { border-left-color: #999; }
.arrow.lf.dim { border-right-color: #999; border-left-color: transparent; }

.sheet-bar { height: 18px; flex: none; display: flex; align-items: stretch; padding-left: 1px; }
.nav { height: 18px; width: 16px; margin-right: 1px; }
.sheet-tab { width: 48px; margin-left: 4px; text-align: center; line-height: 17px; border-bottom: 1px solid #000; font-size: 12.500px; position: relative; }
.sheet-tab::before, .sheet-tab::after { content: ""; position: absolute; top: 0; bottom: -1px; width: 1px; background: #000; }
.sheet-tab::before { left: -1px; transform: skewX(10deg); }
.sheet-tab::after { right: -2px; transform: skewX(-18deg); }
.sheet-fill { width: 259px; flex: none; }
.h-split { width: 3px; margin-right: 1px; border: 1px solid #888; border-top: 0; background: #f0f0f0; }
.h-track { flex: 1; background: repeating-conic-gradient(#fff 0 25%, #ececec 0 50%) 0 0 / 2px 2px; }
.grip-corner { width: 19px; background: repeating-linear-gradient(135deg, #f0f0f0 0 3px, #999 3px 4px); }

.status-bar { height: 27px; flex: none; border-top: 1px solid #e8e8e8; border-bottom: 2px solid #a8a8a8; display: flex; align-items: center; padding: 0 0 0 2px; }
.doc-tab { display: flex; align-items: center; width: 95px; height: 21px; background: repeating-conic-gradient(#d0d0d0 0 25%, #f4f4f4 0 50%) 0 0 / 2px 2px; }
.doc-name { font: 12px "Liberation Mono", monospace; margin-left: -1px; }

.upload { position: absolute; left: 1712px; top: 32px; width: 128px; height: 32px; display: flex; border: 1px solid #1ea6ff; border-radius: 8px; background: #ebf7ff; overflow: hidden; }
.upload-icon { width: 35px; flex: none; background: linear-gradient(135deg, #18a8ff, #0080ff); display: flex; align-items: center; justify-content: center; }
.upload-text { flex: 1; text-align: center; line-height: 30px; color: #1ea6ff; font-size: 12px; }

.activate { position: absolute; left: 1632px; top: 945px; color: #989898; line-height: 1; }
.act-1 { font-size: 21px; margin-bottom: 6px; }
.act-2 { font-size: 14px; }

.meter { position: absolute; left: 1910px; top: 854px; width: 10px; height: 59px; background: #535c6c; border-radius: 4px 0 0 4px; padding: 8px 0 0 3px; display: flex; flex-direction: column; gap: 2px; }
.meter i { width: 5px; height: 1.500px; display: block; background: #222; }
.meter .m2 { background: #e0906a; }
.meter .m3 { background: #e0c060; }
.meter .m4 { background: #c0d888; }
.meter .m5 { background: #70d8c8; }

.ime { position: absolute; left: 1802px; top: 1014px; width: 118px; height: 24px; background: #fff; border: 1px solid #cfe8f8; display: flex; align-items: center; padding-left: 1px; gap: 7px; color: #0a6fd0; }
.ime-zh { font-size: 15px; font-weight: 700; }
.ime-dots { font-size: 14px; font-weight: 700; width: 16px; }
.ime-ic { width: 16px; height: 16px; flex: none; }

.site-mark { position: absolute; left: 1760px; top: 990px; display: flex; pointer-events: none; }
.site-name { font-size: 21.500px; line-height: 24px; font-weight: 700; color: #2e7fd0; white-space: nowrap; }
.site-url { font-size: 17px; line-height: 20px; font-weight: 700; color: rgba(70, 190, 90, .65); margin-top: 4px; letter-spacing: .5px; white-space: nowrap; }
```
